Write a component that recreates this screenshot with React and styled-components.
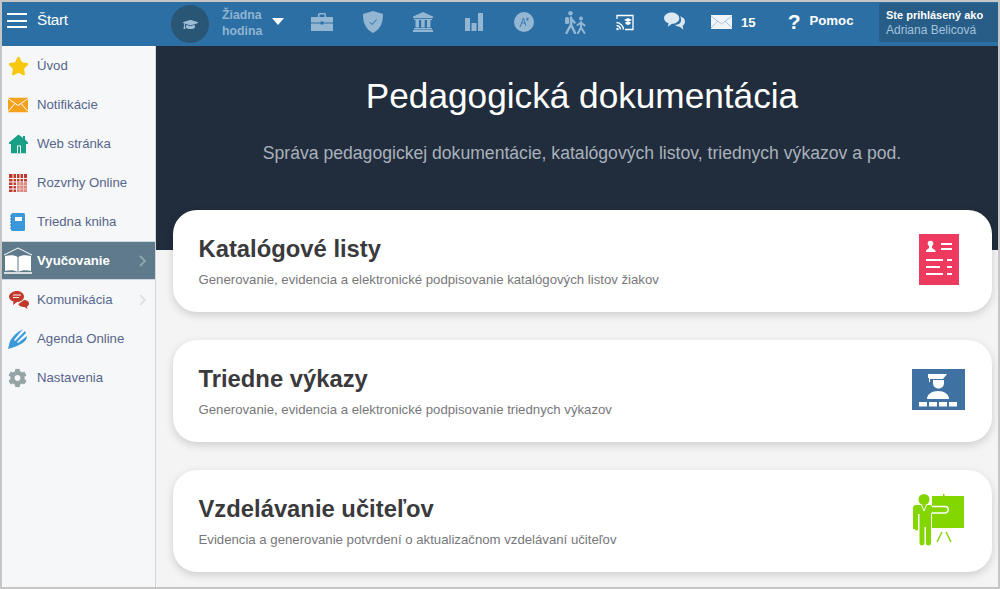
import React from "react";
import styled, { createGlobalStyle } from "styled-components";
import { FaGraduationCap, FaCog, FaStar } from "react-icons/fa";

const GlobalStyle = createGlobalStyle`
  html, body {
    margin: 0;
    padding: 0;
    height: 100%;
    overflow: hidden;
  }
  body {
    font-family: "Liberation Sans", Arial, sans-serif;
  }
`;

const Frame = styled.div`
  width: 1000px;
  height: 589px;
  box-sizing: border-box;
  border: 2px solid #c6c6c6;
  display: flex;
  flex-direction: column;
  overflow: hidden;
  background: #f4f4f4;
`;

const TopBar = styled.header`
  height: 44px;
  flex: none;
  background: #2c6fa4;
  display: flex;
  align-items: center;
  position: relative;
  z-index: 2;
`;

const Burger = styled.div`
  width: 20px;
  margin: 0 0 7px 5px;
  display: flex;
  flex-direction: column;
  gap: 4.5px;
  i {
    display: block;
    height: 2px;
    background: #fff;
  }
`;

const StartLabel = styled.span`
  margin: 0 0 8px 10px;
  width: 134px;
  color: #fff;
  font-size: 15.3px;
  letter-spacing: -0.3px;
`;

const LessonBadge = styled.div`
  width: 38px;
  height: 38px;
  border-radius: 50%;
  background: #2a5675;
  color: #9dbcd5;
  display: flex;
  align-items: center;
  justify-content: center;
  font-size: 15px;
`;

const LessonName = styled.div`
  margin: 0 0 2px 13px;
  width: 50px;
  color: #8fb4d2;
  font-size: 12.3px;
  font-weight: 700;
  line-height: 16px;
`;

const Caret = styled.div`
  width: 0;
  height: 0;
  border-left: 6px solid transparent;
  border-right: 6px solid transparent;
  border-top: 7px solid #fff;
  margin: 0 13px 6px 0;
`;

const IconSlot = styled.div`
  width: ${(p) => p.$w || 50.5}px;
  height: 24px;
  flex: none;
  margin-left: ${(p) => p.$ml || 0}px;
  margin-bottom: 4px;
  display: flex;
  align-items: center;
  justify-content: center;
  color: ${(p) => (p.$bright ? "#fff" : "#93b6d3")};
`;

const HeadLink = styled.span`
  color: #fff;
  font-size: ${(p) => p.$size || 13.2}px;
  font-weight: 700;
  margin: 0 ${(p) => p.$mr || 0}px ${(p) => p.$up || 0}px ${(p) => p.$ml || 0}px;
`;

const UserBox = styled.div`
  position: absolute;
  right: 0;
  top: 1px;
  width: 119px;
  height: 39px;
  box-sizing: border-box;
  padding: 5px 0 0 7px;
  background: #275d87;
  border-radius: 2px 0 0 2px;
  font-size: 11px;
  p {
    margin: 0;
    color: #fff;
    font-weight: 700;
    line-height: 14px;
  }
  span {
    display: block;
    color: #a3c3de;
    font-size: 12px;
    line-height: 16px;
  }
`;

const Body = styled.div`
  flex: 1;
  display: flex;
  min-height: 0;
`;

const Sidebar = styled.nav`
  width: 153px;
  flex: none;
  background: #f6f7f9;
  border-right: 1px solid #d4d6da;
`;

const MenuItem = styled.div`
  height: 39px;
  box-sizing: border-box;
  display: flex;
  align-items: center;
  position: relative;
  padding-left: 35px;
  font-size: 13.2px;
  color: ${(p) => (p.$active ? "#fff" : "#56658c")};
  font-weight: ${(p) => (p.$active ? 700 : 400)};
  background: ${(p) => (p.$active ? "#5f7b8b" : "transparent")};
  border-top: ${(p) => (p.$active ? "1px solid #cfd8de" : "none")};
  border-bottom: ${(p) => (p.$active ? "1px solid #cfd8de" : "none")};
`;

const MenuIcon = styled.span`
  position: absolute;
  left: ${(p) => p.$left ?? 6}px;
  top: 50%;
  transform: translateY(-50%);
  display: flex;
`;

const MenuArrow = styled.span`
  position: absolute;
  right: 8px;
  top: 50%;
  transform: translateY(-50%);
  display: flex;
  color: ${(p) => (p.$active ? "#8fa5b1" : "#dfe2e6")};
`;

const Main = styled.main`
  flex: 1;
  min-width: 0;
  display: flex;
  flex-direction: column;
  position: relative;
`;

const Hero = styled.section`
  height: 204px;
  flex: none;
  background: #212d3d;
  text-align: center;
  color: #fff;
  box-sizing: border-box;
  padding: 27px 0 0 10px;
  margin-bottom: -40px;
  h1 {
    margin: 0;
    font-size: 35.2px;
    font-weight: 400;
    line-height: 46px;
  }
  p {
    margin: 23px 0 0;
    font-size: 17.6px;
    line-height: 22px;
    color: #a9b1bb;
  }
`;

const Cards = styled.div`
  display: flex;
  flex-direction: column;
  gap: 28px;
  padding: 0 6px 0 17px;
  position: relative;
`;

const Card = styled.article`
  height: 102px;
  box-sizing: border-box;
  background: #fff;
  border-radius: 24px;
  box-shadow: 0 3px 8px rgba(0, 0, 0, 0.16);
  display: flex;
  align-items: center;
  justify-content: space-between;
  padding: 0 ${(p) => p.$pad}px 0 25.5px;
  h2 {
    margin: 0;
    font-size: 23.8px;
    font-weight: 700;
    line-height: 28px;
    color: #3a3a3d;
  }
  p {
    margin: 9px 0 0;
    font-size: 13.2px;
    line-height: 16px;
    color: #77777b;
  }
  svg {
    margin-bottom: 3px;
  }
`;

const Chevron = () => (
  <svg width="8" height="12" viewBox="0 0 8 12" fill="none" stroke="currentColor" strokeWidth="1.800">
    <path d="M1 1l5 5-5 5" />
  </svg>
);

const items = [
  { label: "Úvod", icon: <FaStar size={21} color="#f7c80d" /> },
  {
    label: "Notifikácie",
    icon: (
      <svg width="20" height="15" viewBox="0 0 20 15">
        <rect width="20" height="15" fill="#f4a11e" />
        <path d="M0 1l10 7 10-7M0 14l7-8M20 14l-7-8" fill="none" stroke="#fff" strokeWidth="1" />
      </svg>
    ),
  },
  {
    label: "Web stránka",
    left: 7,
    icon: (
      <svg width="19" height="19" viewBox="0 0 19 19">
        <path d="M9.500 0L14 3.500V1.500h2v3.500l3 3v1.500h-2V19H2V9.500H0V8z" fill="#17a085" />
        <rect x="8" y="11" width="4" height="8" fill="#f6f7f9" />
        <rect x="9" y="12" width="2" height="7" fill="#17a085" />
      </svg>
    ),
  },
  {
    label: "Rozvrhy Online",
    left: 7,
    icon: (
      <svg width="18" height="18" viewBox="0 0 18 18">
        <rect width="18" height="18" fill="#c0392b" />
        <path d="M0 4.500h18M0 8h18M0 11.500h18M0 15h18M4 0v18M7.500 0v18M11 0v18M14.500 0v18" stroke="#f6f7f9" strokeWidth="1" />
        <rect x="8" y="8.500" width="10" height="9.500" fill="#e8a9a2" opacity="0.7" />
      </svg>
    ),
  },
  {
    label: "Triedna kniha",
    left: 8,
    icon: (
      <svg width="16" height="18" viewBox="0 0 16 18">
        <rect x="1" width="14" height="18" rx="1.500" fill="#3a99dc" />
        <rect x="5" y="4" width="7" height="4" fill="#fff" />
        <path d="M0 3h2M0 6h2M0 9h2M0 12h2M0 15h2" stroke="#1f6fa8" />
      </svg>
    ),
  },
  {
    label: "Vyučovanie",
    active: true,
    arrow: true,
    left: 1,
    icon: (
      <svg width="30" height="28" viewBox="0 0 30 28">
        <path d="M1 8L15 1l14 7" fill="none" stroke="#fff" strokeWidth="1" />
        <path d="M2 9c5-1 10-1 12.500 1v15c-3-2-8-2-12.500-1zM28 9c-5-1-10-1-12.500 1v15c3-2 8-2 12.500-1z" fill="#fff" />
        <path d="M1 26h28" stroke="#fff" strokeWidth="1.500" />
      </svg>
    ),
  },
  {
    label: "Komunikácia",
    arrow: true,
    left: 7,
    icon: (
      <svg width="20" height="18" viewBox="0 0 20 18">
        <path d="M8 0c4 0 7 2.500 7 5.500S12 11 8 11l-4 3 .5-3.500C2 10 0 8 0 5.500 0 2.500 4 0 8 0z" fill="#c0392b" />
        <path d="M15 9c3 0 5 1.500 5 3.500 0 1.500-1 2.500-2 3l.5 2.500-3-2c-3 0-6-1-6-3z" fill="#c0392b" />
        <path d="M4 4h8M4 6.500h6" stroke="#f6f7f9" />
      </svg>
    ),
  },
  {
    label: "Agenda Online",
    icon: (
      <svg width="20" height="20" viewBox="0 0 20 20">
        <path d="M0 20l2-8C5 7 9 3 15 0L6 11l1 1L17 2l1 2-9 9 1 1 9-7c0 3-2 6-6 8-3 2-7 3-13 5z" fill="#3a9ad9" />
      </svg>
    ),
  },
  { label: "Nastavenia", icon: <FaCog size={19} color="#95a5a6" /> },
];

const App = () => (
  <Frame>
    <GlobalStyle />
    <TopBar>
      <Burger>
        <i />
        <i />
        <i />
      </Burger>
      <StartLabel>Štart</StartLabel>
      <LessonBadge>
        <FaGraduationCap />
      </LessonBadge>
      <LessonName>
        Žiadna
        <br />
        hodina
      </LessonName>
      <Caret />
      <IconSlot>
        <svg width="22" height="18" viewBox="0 0 22 18" fill="currentColor">
          <path d="M7 4V1.500C7 .7 7.700 0 8.500 0h5c.8 0 1.500.7 1.500 1.500V4h-1.500V1.500h-5V4z" />
          <path d="M0 4h22v5.500H12.500V8.500h-3v1H0z" />
          <path d="M0 10.500h9.500v1h3v-1H22V18H0z" />
        </svg>
      </IconSlot>
      <IconSlot>
        <svg width="20" height="22" viewBox="0 0 20 22">
          <path d="M10 0l10 3c0 8-2 15-10 19C2 18 0 11 0 3z" fill="currentColor" />
          <path d="M6.500 11l2.500 2.500 4.500-5" fill="none" stroke="#2c6fa4" strokeWidth="1" />
        </svg>
      </IconSlot>
      <IconSlot>
        <svg width="20" height="20" viewBox="0 0 20 20" fill="currentColor">
          <path d="M10 0l10 4.500V6H0V4.500z" />
          <rect x="1" y="6.800" width="18" height="1.200" />
          <rect x="2.500" y="8" width="3.500" height="7.500" />
          <rect x="8.200" y="8" width="3.500" height="7.500" />
          <rect x="14" y="8" width="3.500" height="7.500" />
          <rect x="1" y="16" width="18" height="1.500" />
          <rect y="18" width="20" height="2" />
        </svg>
      </IconSlot>
      <IconSlot>
        <svg width="18" height="18" viewBox="0 0 18 18" fill="currentColor">
          <rect y="5" width="5" height="13" />
          <rect x="6.500" y="10" width="5" height="8" />
          <rect x="13" width="5" height="18" />
        </svg>
      </IconSlot>
      <IconSlot>
        <svg width="20" height="20" viewBox="0 0 20 20">
          <circle cx="10" cy="10" r="10" fill="currentColor" />
          <path d="M6 15l3.500-9 2.500 8M7.500 11h4M12 8l3-2M13 5.500l1 3.500" fill="none" stroke="#2c6fa4" strokeWidth="0.800" />
        </svg>
      </IconSlot>
      <IconSlot>
        <svg width="24" height="23" viewBox="0 0 24 23" fill="none" stroke="currentColor" strokeLinecap="round">
          <circle cx="7.500" cy="2.300" r="2.300" fill="currentColor" stroke="none" />
          <circle cx="18" cy="7.500" r="2" fill="currentColor" stroke="none" />
          <rect x="2" y="6" width="4" height="7" rx="1.500" fill="currentColor" stroke="none" />
          <path d="M8 6.500v7L3.500 22M8 13.500l4 8.500M8 7.500l3.500 4" strokeWidth="2.500" />
          <path d="M18 11v5.500L15 22M18 16.500l3.500 5.500M18 11.500l-3.500 2.500M18 11.500l3.500 3" strokeWidth="2" />
        </svg>
      </IconSlot>
      <IconSlot $bright>
        <svg width="18" height="17" viewBox="0 0 18 17" fill="none" stroke="#fff" strokeWidth="1.300">
          <path d="M1 5V1.500h16v14H9" />
          <path d="M0.500 8.500a7.500 7.500 0 0 1 7 7M0.500 11.500a4.500 4.500 0 0 1 4 4" />
          <circle cx="1.500" cy="15" r="1.200" fill="#fff" stroke="none" />
          <path d="M12 4l4 2-4 2-4-2zM9.500 8v2l2.500 1 2.500-1V8z" fill="#fff" stroke="none" />
        </svg>
      </IconSlot>
      <IconSlot $bright $w={47.5}>
        <svg width="21" height="20" viewBox="0 0 22 20" fill="#dce8f2">
          <path d="M8 0c4.400 0 8 2.700 8 6s-3.600 6-8 6l-4 3 .8-3.600C2 10.300 0 8.300 0 6c0-3.300 3.600-6 8-6z" />
          <path d="M17 4c3 1 5 3 5 5.500 0 2-1 3.500-2.500 4.500l.8 4-3.800-3c-2 0-4-.6-5-2 5 0 8-3 5.500-9z" />
        </svg>
      </IconSlot>
      <IconSlot $bright $w={30} $ml={8}>
        <svg width="21" height="14" viewBox="0 0 21 14">
          <rect width="21" height="14" fill="#eef4f9" />
          <path d="M0 1l10.500 8L21 1M0 13l7-7M21 13l-7-7" fill="none" stroke="#9cbbd4" strokeWidth="0.800" />
        </svg>
      </IconSlot>
      <HeadLink $ml={5} $mr={32} $up={4}>
        15
      </HeadLink>
      <HeadLink $size={21} $mr={9} $up={4}>
        ?
      </HeadLink>
      <HeadLink $up={7}>Pomoc</HeadLink>
      <UserBox>
        <p>Ste prihlásený ako</p>
        <span>Adriana Belicová</span>
      </UserBox>
    </TopBar>
    <Body>
      <Sidebar>
        {items.map((it) => (
          <MenuItem key={it.label} $active={it.active}>
            <MenuIcon $left={it.left}>{it.icon}</MenuIcon>
            {it.label}
            {it.arrow && (
              <MenuArrow $active={it.active}>
                <Chevron />
              </MenuArrow>
            )}
          </MenuItem>
        ))}
      </Sidebar>
      <Main>
        <Hero>
          <h1>Pedagogická dokumentácia</h1>
          <p>Správa pedagogickej dokumentácie, katalógových listov, triednych výkazov a pod.</p>
        </Hero>
        <Cards>
          <Card $pad={33}>
            <div>
              <h2>Katalógové listy</h2>
              <p>Generovanie, evidencia a elektronické podpisovanie katalógových listov žiakov</p>
            </div>
            <svg width="40" height="51" viewBox="0 0 40 51">
              <rect width="40" height="51" fill="#ee3a5e" />
              <g fill="#fff">
                <circle cx="11.500" cy="9.500" r="2.800" />
                <path d="M10 11h3v3l3.500 2.500V18H7v-1.500l3-2.500z" />
              </g>
              <path d="M22 10h11M22 15h11M7 26h17M28 26h5M7 33h14M28 33h5M7 40h17M28 40h5" stroke="#fff" strokeWidth="1.800" />
            </svg>
          </Card>
          <Card $pad={27}>
            <div>
              <h2>Triedne výkazy</h2>
              <p>Generovanie, evidencia a elektronické podpisovanie triednych výkazov</p>
            </div>
            <svg width="53" height="41" viewBox="0 0 53 41">
              <rect width="53" height="41" fill="#3f72a3" />
              <g fill="#fff">
                <path d="M16 5h19l-4 5H18v3h-1V9h-1z" />
                <path d="M21 11h11v3c0 3-2 5.500-5.500 5.500S21 17 21 14z" />
                <path d="M15 30c0-5 5-8 11-8s11 3 11 8z" />
                <rect x="7" y="33" width="8" height="4.500" />
                <rect x="17" y="33" width="8" height="4.500" />
                <rect x="27" y="33" width="8" height="4.500" />
                <rect x="37" y="33" width="8" height="4.500" />
              </g>
            </svg>
          </Card>
          <Card $pad={27}>
            <div>
              <h2>Vzdelávanie učiteľov</h2>
              <p>Evidencia a generovanie potvrdení o aktualizačnom vzdelávaní učiteľov</p>
            </div>
            <svg width="52" height="52" viewBox="0 0 52 52" fill="#84d600">
              <rect x="19" y="2" width="32" height="32" />
              <rect x="30" y="0" width="1.500" height="2" />
              <circle cx="11" cy="5.500" r="5.500" />
              <path d="M15 12.500H32a3.200 3.200 0 0 1 0 6.500H19z" stroke="#fff" strokeWidth="1.500" />
              <path d="M3 11h14a2 2 0 0 1 2 2v6h-1v30a2.500 2.500 0 0 1-5 0V33h-1.500v16a2.500 2.500 0 0 1-5 0V20H5v15a1.500 1.500 0 0 1-3 0H0V14a3 3 0 0 1 3-3z" />
              <path d="M8.500 11l2.500 6 2.500-6" fill="none" stroke="#fff" strokeWidth="1" />
              <path d="M29 38l-5 10M33 38l5 10" fill="none" stroke="#84d600" strokeWidth="1.500" />
            </svg>
          </Card>
        </Cards>
      </Main>
    </Body>
  </Frame>
);

export default App;
